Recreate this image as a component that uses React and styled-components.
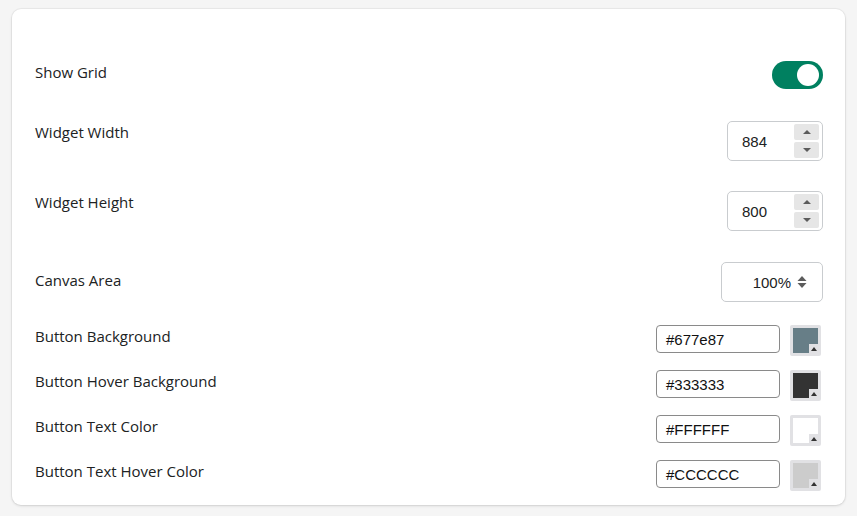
import React from 'react';
import styled, { createGlobalStyle } from 'styled-components';

const GlobalStyle = createGlobalStyle`
    html, body {
        margin: 0;
        padding: 0;
        background: #f5f5f5;
    }
    body {
        font-family: "Open Sans", "Liberation Sans", sans-serif;
    }
`;

const colorRows = [
    { label: 'Button Background', value: '#677e87' },
    { label: 'Button Hover Background', value: '#333333' },
    { label: 'Button Text Color', value: '#FFFFFF' },
    { label: 'Button Text Hover Color', value: '#CCCCCC' },
];

const App = () => {
    return (
        <>
            <GlobalStyle />
            <Page>
                <Card>
                    <Row $space={0}>
                        <Label>Show Grid</Label>
                        <Toggle>
                            <Knob />
                        </Toggle>
                    </Row>

                    <Row $space={32}>
                        <Label $offset={-1}>Widget Width</Label>
                        <NumberBox>
                            <NumberValue>884</NumberValue>
                            <Spinner>
                                <SpinButton><Arrow /></SpinButton>
                                <SpinButton><Arrow $down /></SpinButton>
                            </Spinner>
                        </NumberBox>
                    </Row>

                    <Row $space={30}>
                        <Label>Widget Height</Label>
                        <NumberBox>
                            <NumberValue>800</NumberValue>
                            <Spinner>
                                <SpinButton><Arrow /></SpinButton>
                                <SpinButton><Arrow $down /></SpinButton>
                            </Spinner>
                        </NumberBox>
                    </Row>

                    <Row $space={31}>
                        <Label $offset={7}>Canvas Area</Label>
                        <SelectBox>
                            <span>100%</span>
                            <svg width="10" height="14" viewBox="0 0 10 14">
                                <path d="M5 1 L9.5 6 H0.5 Z" fill="#5c5c5c" />
                                <path d="M5 13 L9.5 8 H0.5 Z" fill="#5c5c5c" />
                            </svg>
                        </SelectBox>
                    </Row>

                    {colorRows.map(({ label, value }, i) => (
                        <Row key={label} $space={i === 0 ? 23 : 14}>
                            <Label>{label}</Label>
                            <ColorControls>
                                <HexInput>{value}</HexInput>
                                <Swatch>
                                    <SwatchFill style={{ background: value }} />
                                    <SwatchCorner>
                                        <svg width="6" height="4" viewBox="0 0 6 4">
                                            <path d="M3 0 L6 4 H0 Z" fill="#333" />
                                        </svg>
                                    </SwatchCorner>
                                </Swatch>
                            </ColorControls>
                        </Row>
                    ))}
                </Card>
            </Page>
        </>
    );
};

const Page = styled.div`
    padding: 9px 12px 12px 12px;
`;

const Card = styled.div`
    background: #ffffff;
    border-radius: 9px;
    box-shadow: 0 0 0 1px rgba(0, 0, 0, 0.04), 0 1px 3px rgba(0, 0, 0, 0.12);
    padding: 52px 22px 14px 23px;
    display: flex;
    flex-direction: column;
`;

const Row = styled.div`
    display: flex;
    justify-content: space-between;
    align-items: flex-start;
    margin-top: ${({ $space }) => $space}px;
`;

const Label = styled.div`
    font-size: 15px;
    line-height: 22px;
    color: #202223;
    padding-top: ${({ $offset }) => ($offset || 0) + 'px'};
`;

const Toggle = styled.div`
    width: 51px;
    height: 28px;
    border-radius: 14px;
    background: #008060;
    display: flex;
    align-items: center;
    justify-content: flex-end;
    padding-right: 4px;
    box-sizing: border-box;
`;

const Knob = styled.div`
    width: 22px;
    height: 22px;
    border-radius: 50%;
    background: #ffffff;
`;

const NumberBox = styled.div`
    width: 96px;
    height: 40px;
    box-sizing: border-box;
    border: 1px solid #c9cccf;
    border-radius: 5px;
    display: flex;
    align-items: center;
    justify-content: space-between;
    padding: 0 3px 0 14px;
`;

const NumberValue = styled.span`
    font-family: "Liberation Sans", Arial, sans-serif;
    font-size: 15px;
    color: #202223;
`;

const Spinner = styled.div`
    display: flex;
    flex-direction: column;
    gap: 2px;
`;

const SpinButton = styled.div`
    width: 25px;
    height: 16px;
    background: #e6e6e6;
    border-radius: 2px;
    display: flex;
    align-items: center;
    justify-content: center;
`;

const Arrow = styled.div`
    width: 0;
    height: 0;
    border-left: 4px solid transparent;
    border-right: 4px solid transparent;
    ${({ $down }) => ($down ? 'border-top: 4px solid #5c5c5c;' : 'border-bottom: 4px solid #5c5c5c;')}
`;

const SelectBox = styled.div`
    width: 102px;
    height: 40px;
    box-sizing: border-box;
    border: 1px solid #c9cccf;
    border-radius: 5px;
    display: flex;
    align-items: center;
    justify-content: flex-end;
    gap: 6px;
    padding-right: 15px;
    font-family: "Liberation Sans", Arial, sans-serif;
    font-size: 15px;
    color: #202223;
`;

const ColorControls = styled.div`
    display: flex;
    align-items: flex-start;
    gap: 10px;
    margin-right: 2px;
`;

const HexInput = styled.div`
    width: 124px;
    height: 28px;
    box-sizing: border-box;
    border: 1px solid #8a8a8a;
    border-radius: 4px;
    padding-left: 9px;
    display: flex;
    align-items: center;
    font-family: "Liberation Sans", Arial, sans-serif;
    font-size: 15px;
    color: #111;
`;

const Swatch = styled.div`
    position: relative;
    width: 31px;
    height: 31px;
    box-sizing: border-box;
    background: #e1e1e4;
    border-radius: 2px;
    padding: 3px;
`;

const SwatchFill = styled.div`
    width: 100%;
    height: 100%;
`;

const SwatchCorner = styled.div`
    position: absolute;
    right: 3px;
    bottom: 3px;
    width: 9px;
    height: 9px;
    background: #e1e1e4;
    display: flex;
    align-items: center;
    justify-content: center;
`;

export default App;
